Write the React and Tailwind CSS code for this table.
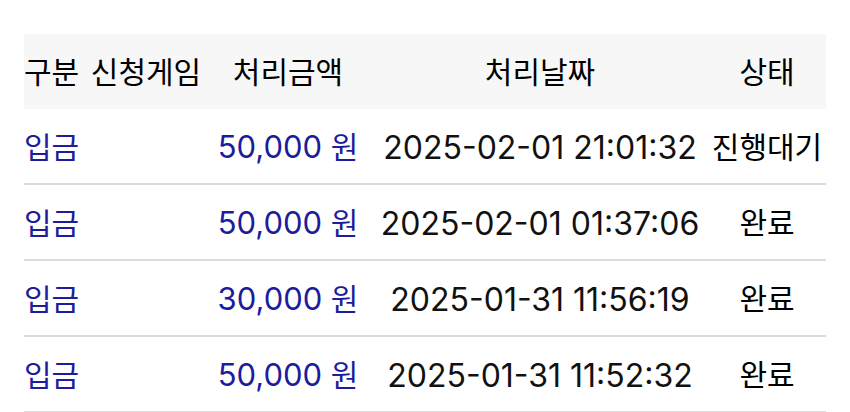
import React from 'react';

const rows = [
    { type: '입금', game: '', amount: '50,000', date: '2025-02-01 21:01:32', status: '진행대기' },
    { type: '입금', game: '', amount: '50,000', date: '2025-02-01 01:37:06', status: '완료' },
    { type: '입금', game: '', amount: '30,000', date: '2025-01-31 11:56:19', status: '완료' },
    { type: '입금', game: '', amount: '50,000', date: '2025-01-31 11:52:32', status: '완료' },
];

const cols = 'grid grid-cols-[64px_116px_168px_336px_118px] items-center';

export default function App() {
    return (
        <div className="w-[850px] h-[412px] overflow-hidden bg-white pt-[34px] px-6 text-[30px] text-black font-['Inter','Noto_Sans_CJK_KR',sans-serif]">
            <div className={`${cols} h-[75px] bg-[#f7f7f7] text-center whitespace-nowrap pt-[2px]`}>
                <div className="text-left">구분</div>
                <div>신청게임</div>
                <div>처리금액</div>
                <div>처리날짜</div>
                <div>상태</div>
            </div>
            {rows.map((row, i) => (
                <div key={i} className={`${cols} h-[76px] border-b-2 border-[#dcdcdc] text-center whitespace-nowrap pt-[3px]`}>
                    <div className="text-left text-[#1c1c9c]">{row.type}</div>
                    <div>{row.game}</div>
                    <div className="text-[#1c1c9c]">
                        <span className="text-[31px]">{row.amount}</span> 원
                    </div>
                    <div className="text-[32px] text-[#111]">{row.date}</div>
                    <div>{row.status}</div>
                </div>
            ))}
        </div>
    );
}
